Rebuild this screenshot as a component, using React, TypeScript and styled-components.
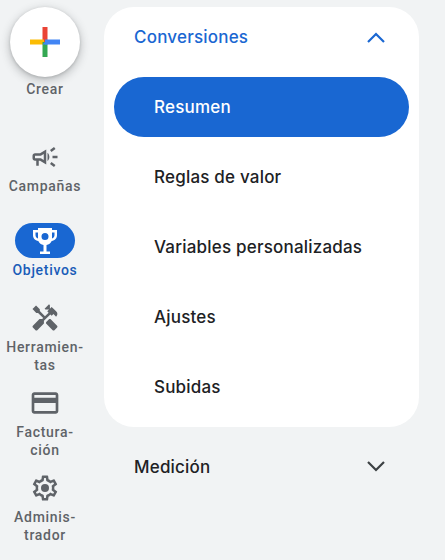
import React from 'react'
import styled, { createGlobalStyle } from 'styled-components'
import { MdOutlineCampaign, MdHandyman, MdOutlineCreditCard } from 'react-icons/md'

const GlobalStyle = createGlobalStyle`
    html, body {
        margin: 0;
        height: 100%;
        background: #f1f3f4;
    }
    body {
        font-family: 'Roboto', 'Liberation Sans', sans-serif;
        overflow: hidden;
    }
`

const Page = styled.div`
    display: flex;
    width: 445px;
    height: 560px;
    background: #f1f3f4;
`

const Rail = styled.nav`
    width: 90px;
    flex: none;
    display: flex;
    flex-direction: column;
    align-items: center;
    padding-top: 7px;
`

const CreateBlock = styled.div`
    height: 132px;
    display: flex;
    flex-direction: column;
    align-items: center;
    gap: 3px;
`

const Fab = styled.button`
    width: 70px;
    height: 70px;
    border: 0;
    padding: 0;
    border-radius: 50%;
    background: #fff;
    box-shadow: 0 3px 8px 1px rgba(60, 64, 67, 0.28), 0 1px 3px rgba(60, 64, 67, 0.2);
    display: flex;
    align-items: center;
    justify-content: center;
`

const RailItem = styled.div<{ $height: number }>`
    width: 90px;
    height: ${props => props.$height}px;
    display: flex;
    flex-direction: column;
    align-items: center;
    gap: 3px;
`

const IconSlot = styled.div<{ $active?: boolean }>`
    width: 60px;
    height: 35px;
    flex: none;
    border-radius: 18px;
    display: flex;
    align-items: center;
    justify-content: center;
    color: ${props => (props.$active ? '#fff' : '#5f6368')};
    background: ${props => (props.$active ? '#1967d2' : 'transparent')};
`

const RailLabel = styled.div<{ $active?: boolean }>`
    font-size: 14px;
    line-height: 18px;
    font-weight: 500;
    letter-spacing: 0.7px;
    text-align: center;
    white-space: nowrap;
    color: ${props => (props.$active ? '#1a5cb8' : '#5f6368')};
`

const Content = styled.main`
    flex: 1;
    padding: 7px 26px 0 14px;
`

const Card = styled.section`
    background: #fff;
    border-radius: 30px;
    padding-bottom: 10px;
`

const SectionHeader = styled.div<{ $open?: boolean; $height: number }>`
    height: ${props => props.$height}px;
    padding: 0 33px 0 30px;
    display: flex;
    align-items: center;
    justify-content: space-between;
    font-family: 'Inter', 'Liberation Sans', sans-serif;
    font-size: 17px;
    font-weight: 500;
    letter-spacing: 0.2px;
    color: ${props => (props.$open ? '#1a67d2' : '#202124')};
`

const List = styled.div`
    padding: 10px 10px 0;
    display: flex;
    flex-direction: column;
    gap: 10px;
`

const ListItem = styled.div<{ $active?: boolean }>`
    height: 60px;
    padding: 0 40px;
    border-radius: 30px;
    display: flex;
    align-items: center;
    font-family: 'Inter', 'Liberation Sans', sans-serif;
    font-size: 17px;
    font-weight: 500;
    letter-spacing: 0.2px;
    color: ${props => (props.$active ? '#fff' : '#202124')};
    background: ${props => (props.$active ? '#1967d2' : 'transparent')};
`

const Chevron: React.FC<{ up?: boolean; color: string }> = ({ up, color }) => (
    <svg width="20" height="12" viewBox="0 0 20 12" fill="none" stroke={color} strokeWidth="2.2">
        <path d={up ? 'M2 11L10 3L18 11' : 'M2 1L10 9L18 1'} />
    </svg>
)

const PlusIcon = () => (
    <svg width="32" height="32" viewBox="0 0 32 32">
        <rect x="13.500" y="1" width="5" height="15" fill="#ea4335" />
        <rect x="1" y="13.500" width="14" height="5" fill="#fbbc04" />
        <rect x="13.500" y="16" width="5" height="15" fill="#34a853" />
        <rect x="16" y="13.500" width="15" height="5" fill="#4285f4" />
        <path d="M13.500 18.500L18.500 13.500V18.500Z" fill="#4285f4" />
    </svg>
)

const TrophyIcon = () => (
    <svg width="24" height="26" viewBox="0 0 24 26" fill="#fff">
        <path
            fillRule="evenodd"
            d="M5 0h14v2h5v5c0 3.200-2 5.500-5.300 5.900-1 2.300-2.900 3.700-5.200 4.100v6.500H17V26H7v-2.500h3.500V17c-2.300-.4-4.200-1.800-5.200-4.100C2 12.500 0 10.200 0 7V2h5V0zM2.500 4.500V7c0 1.700 1 3 2.500 3.400V4.500H2.500zM19 4.500v5.900c1.500-.4 2.500-1.700 2.500-3.400V4.500H19zM12 5a3.500 3.500 0 1 0 0 7 3.500 3.500 0 0 0 0-7z"
        />
    </svg>
)

const GearIcon = () => (
    <svg width="30" height="30" viewBox="0 0 24 24" fill="#5f6368">
        <path d="M19.430 12.980c.04-.32.07-.64.07-.98 0-.34-.03-.66-.07-.98l2.110-1.650c.19-.15.24-.42.12-.64l-2-3.460c-.09-.16-.26-.25-.44-.25-.06 0-.12.01-.17.03l-2.490 1c-.52-.4-1.080-.73-1.690-.98l-.38-2.650C14.460 2.180 14.250 2 14 2h-4c-.25 0-.46.18-.49.42l-.38 2.650c-.61.25-1.170.59-1.690.98l-2.490-1c-.06-.02-.12-.03-.18-.03-.17 0-.34.09-.43.25l-2 3.460c-.13.22-.07.49.12.64l2.110 1.650c-.04.32-.07.65-.07.98 0 .33.03.66.07.98l-2.110 1.650c-.19.15-.24.42-.12.64l2 3.460c.09.16.26.25.44.25.06 0 .12-.01.17-.03l2.490-1c.52.4 1.080.73 1.690.98l.38 2.650c.03.24.24.42.49.42h4c.25 0 .46-.18.49-.42l.38-2.650c.61-.25 1.170-.59 1.690-.98l2.490 1c.06.02.12.03.18.03.17 0 .34-.09.43-.25l2-3.460c.12-.22.07-.49-.12-.64l-2.110-1.650zm-1.980-1.710c.04.31.05.52.05.73 0 .21-.02.43-.05.73l-.14 1.130.89.7 1.080.84-.7 1.210-1.270-.51-1.040-.42-.9.68c-.43.32-.84.56-1.250.73l-1.060.43-.16 1.130-.2 1.350h-1.400l-.19-1.350-.16-1.130-1.060-.43c-.43-.18-.83-.41-1.230-.71l-.91-.7-1.060.43-1.270.51-.7-1.210 1.080-.84.89-.7-.14-1.130c-.03-.31-.05-.54-.05-.74s.02-.43.05-.73l.14-1.130-.89-.7-1.080-.84.7-1.210 1.270.51 1.040.42.9-.68c.43-.32.84-.56 1.250-.73l1.060-.43.16-1.130.2-1.350h1.390l.19 1.350.16 1.130 1.060.43c.43.18.83.41 1.230.71l.91.7 1.060-.43 1.270-.51.7 1.210-1.070.85-.89.7.14 1.130z" />
        <circle cx="12" cy="12" r="3.200" />
    </svg>
)

const App: React.FC = () => (
    <Page>
        <GlobalStyle />
        <Rail>
            <CreateBlock>
                <Fab aria-label="Crear">
                    <PlusIcon />
                </Fab>
                <RailLabel>Crear</RailLabel>
            </CreateBlock>
            <RailItem $height={84}>
                <IconSlot>
                    <MdOutlineCampaign size={30} />
                </IconSlot>
                <RailLabel>Campañas</RailLabel>
            </RailItem>
            <RailItem $height={77}>
                <IconSlot $active>
                    <TrophyIcon />
                </IconSlot>
                <RailLabel $active>Objetivos</RailLabel>
            </RailItem>
            <RailItem $height={85}>
                <IconSlot>
                    <MdHandyman size={30} />
                </IconSlot>
                <RailLabel>
                    Herramien-
                    <br />
                    tas
                </RailLabel>
            </RailItem>
            <RailItem $height={85}>
                <IconSlot>
                    <MdOutlineCreditCard size={32} />
                </IconSlot>
                <RailLabel>
                    Factura-
                    <br />
                    ción
                </RailLabel>
            </RailItem>
            <RailItem $height={85}>
                <IconSlot>
                    <GearIcon />
                </IconSlot>
                <RailLabel>
                    Adminis-
                    <br />
                    trador
                </RailLabel>
            </RailItem>
        </Rail>
        <Content>
            <Card>
                <SectionHeader $open $height={60}>
                    Conversiones
                    <Chevron up color="#1a67d2" />
                </SectionHeader>
                <List>
                    <ListItem $active>Resumen</ListItem>
                    <ListItem>Reglas de valor</ListItem>
                    <ListItem>Variables personalizadas</ListItem>
                    <ListItem>Ajustes</ListItem>
                    <ListItem>Subidas</ListItem>
                </List>
            </Card>
            <SectionHeader $height={80}>
                Medición
                <Chevron color="#3c4043" />
            </SectionHeader>
        </Content>
    </Page>
)

export default App
